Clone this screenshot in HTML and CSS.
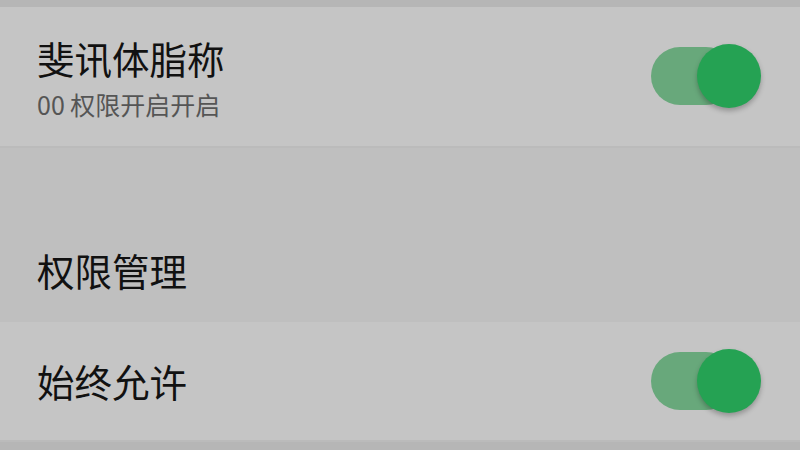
FILE: index.html
```html
<!DOCTYPE html>
<html lang="zh">
<head>
<meta charset="utf-8">
<link rel="stylesheet" href="styles.css">
</head>
<body>
<div class="page">
  <div class="strip"></div>
  <div class="row row-device">
    <div class="text">
      <div class="title">斐讯体脂称</div>
      <div class="subtitle">00 权限开启开启</div>
    </div>
    <div class="switch"><span class="track"></span><span class="thumb"></span></div>
  </div>
  <div class="section">
    <div class="section-title">权限管理</div>
  </div>
  <div class="row row-perm">
    <div class="text">
      <div class="title">始终允许</div>
    </div>
    <div class="switch"><span class="track"></span><span class="thumb"></span></div>
  </div>
  <div class="strip strip-bottom"></div>
</div>
</body>
</html>
```
FILE: styles.css
```css
html, body {
  margin: 0;
  padding: 0;
  width: 800px;
  height: 450px;
  overflow: hidden;
  background: #b6b6b6;
  font-family: "Noto Sans CJK SC", "Noto Sans", sans-serif;
}
.page {
  display: flex;
  flex-direction: column;
  width: 800px;
  height: 450px;
}
.strip {
  height: 7px;
  background: #b6b6b6;
  flex: none;
}
.strip-bottom {
  height: 8px;
}
.row {
  display: flex;
  align-items: center;
  justify-content: space-between;
  background: #c5c5c5;
  padding: 0 39px 0 37px;
  flex: none;
  border-bottom: 2px solid #bbbbbb;
}
.row-device {
  height: 139px;
}
.row-perm {
  height: 118px;
}
.text {
  display: flex;
  flex-direction: column;
}
.title {
  font-size: 37.5px;
  line-height: 46px;
  color: #111;
}
.subtitle {
  font-size: 25px;
  line-height: 30px;
  color: #555;
  margin-top: 8px;
}
.section {
  height: 174px;
  background: #bfbfbf;
  padding-top: 99px;
  padding-left: 37px;
  box-sizing: border-box;
  flex: none;
}
.section-title {
  font-size: 37.5px;
  line-height: 46px;
  color: #111;
}
.switch {
  position: relative;
  width: 110px;
  height: 65px;
  flex: none;
}
.track {
  position: absolute;
  left: 0;
  top: 3px;
  width: 84px;
  height: 58px;
  border-radius: 29px;
  background: #68a87b;
}
.thumb {
  position: absolute;
  right: 0;
  top: 0;
  width: 64px;
  height: 64px;
  border-radius: 50%;
  background: #25a253;
  box-shadow: 0 3px 5px rgba(0, 0, 0, 0.25);
}
```
